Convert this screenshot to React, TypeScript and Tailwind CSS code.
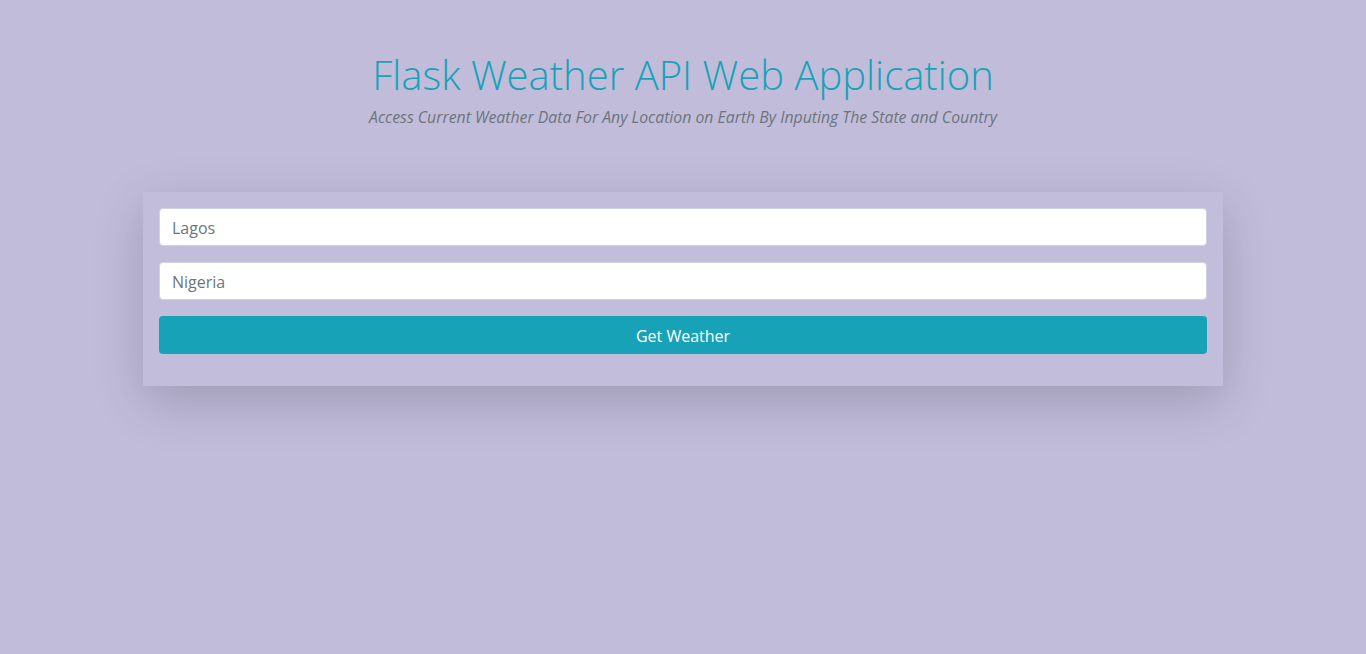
export default function App() {
    return (
        <div
            className="min-h-[654px] w-full bg-[#c1bcda] pt-[51px]"
            style={{ fontFamily: '"Open Sans", "Noto Sans", sans-serif' }}>
            <div className="text-center">
                <h1 className="text-[40px] leading-[48px] font-light text-[#17a2b8]">Flask Weather API Web Application</h1>
                <p className="mt-[6px] text-[15.8px] leading-6 text-[#6c757d] italic">
                    Access Current Weather Data For Any Location on Earth By Inputing The State and Country
                </p>
            </div>
            <div className="mx-auto mt-[63px] w-[1080px] bg-[#c2bddb] px-4 pt-4 pb-8 shadow-[0_16px_48px_rgba(0,0,0,0.175)]">
                <form className="flex flex-col gap-4" onSubmit={e => e.preventDefault()}>
                    <input
                        placeholder="Lagos"
                        className="h-[38px] w-full rounded border border-[#ced4da] bg-white px-3 pt-[2px] text-[16px] text-[#495057] outline-none placeholder:text-[#6c757d]"
                    />
                    <input
                        placeholder="Nigeria"
                        className="h-[38px] w-full rounded border border-[#ced4da] bg-white px-3 pt-[2px] text-[16px] text-[#495057] outline-none placeholder:text-[#6c757d]"
                    />
                    <button type="submit" className="h-[38px] w-full rounded bg-[#17a2b8] pt-[2px] text-[16px] text-white">
                        Get Weather
                    </button>
                </form>
            </div>
        </div>
    )
}
